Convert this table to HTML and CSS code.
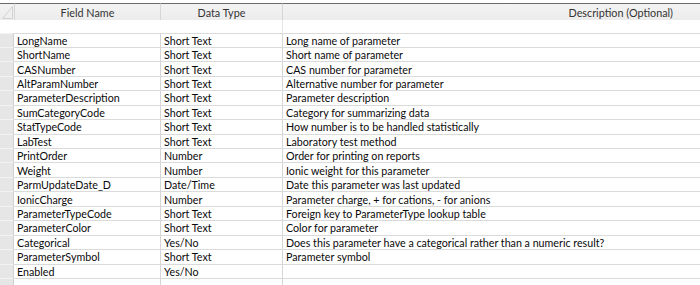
FILE: index.html
```html
<!DOCTYPE html>
<html>
<head>
<meta charset="utf-8">
<link rel="stylesheet" href="styles.css">
</head>
<body>
<div class="sheet">
  <div class="hdr sel"><svg class="corner" width="14" height="16" viewBox="0 0 14 16"><path d="M12.5 2.5 L12.5 14.5 L2.5 14.5 Z" fill="none" stroke="#d2d2d2" stroke-width="1"/></svg></div>
  <div class="hdr c1">Field Name</div>
  <div class="hdr c2">Data Type</div>
  <div class="hdr c3">Description (Optional)</div>

  <div class="gap sel"></div><div class="gap"></div><div class="gap"></div><div class="gap c3g"></div>

  <div class="sel row"></div><div class="cell c1">LongName</div><div class="cell c2">Short Text</div><div class="cell c3">Long name of parameter</div>
  <div class="sel row"></div><div class="cell c1">ShortName</div><div class="cell c2">Short Text</div><div class="cell c3">Short name of parameter</div>
  <div class="sel row"></div><div class="cell c1">CASNumber</div><div class="cell c2">Short Text</div><div class="cell c3">CAS number for parameter</div>
  <div class="sel row"></div><div class="cell c1">AltParamNumber</div><div class="cell c2">Short Text</div><div class="cell c3">Alternative number for parameter</div>
  <div class="sel row"></div><div class="cell c1">ParameterDescription</div><div class="cell c2">Short Text</div><div class="cell c3">Parameter description</div>
  <div class="sel row"></div><div class="cell c1">SumCategoryCode</div><div class="cell c2">Short Text</div><div class="cell c3">Category for summarizing data</div>
  <div class="sel row"></div><div class="cell c1">StatTypeCode</div><div class="cell c2">Short Text</div><div class="cell c3">How number is to be handled statistically</div>
  <div class="sel row"></div><div class="cell c1">LabTest</div><div class="cell c2">Short Text</div><div class="cell c3">Laboratory test method</div>
  <div class="sel row"></div><div class="cell c1">PrintOrder</div><div class="cell c2">Number</div><div class="cell c3">Order for printing on reports</div>
  <div class="sel row"></div><div class="cell c1">Weight</div><div class="cell c2">Number</div><div class="cell c3">Ionic weight for this parameter</div>
  <div class="sel row"></div><div class="cell c1">ParmUpdateDate_D</div><div class="cell c2">Date/Time</div><div class="cell c3">Date this parameter was last updated</div>
  <div class="sel row"></div><div class="cell c1">IonicCharge</div><div class="cell c2">Number</div><div class="cell c3">Parameter charge, + for cations, - for anions</div>
  <div class="sel row"></div><div class="cell c1">ParameterTypeCode</div><div class="cell c2">Short Text</div><div class="cell c3">Foreign key to ParameterType lookup table</div>
  <div class="sel row"></div><div class="cell c1">ParameterColor</div><div class="cell c2">Short Text</div><div class="cell c3">Color for parameter</div>
  <div class="sel row"></div><div class="cell c1">Categorical</div><div class="cell c2">Yes/No</div><div class="cell c3">Does this parameter have a categorical rather than a numeric result?</div>
  <div class="sel row"></div><div class="cell c1">ParameterSymbol</div><div class="cell c2">Short Text</div><div class="cell c3">Parameter symbol</div>
  <div class="sel row"></div><div class="cell c1">Enabled</div><div class="cell c2">Yes/No</div><div class="cell c3"></div>
  <div class="sel row"></div><div class="cell c1"></div><div class="cell c2"></div><div class="cell c3"></div>
</div>
</body>
</html>
```

FILE: styles.css
```css
html, body {
  margin: 0;
  padding: 0;
  background: #ffffff;
  overflow: hidden;
}
body {
  padding-top: 3px;
  font-family: Lato, "Open Sans", sans-serif;
  font-size: 10.7px;
  color: #0a0a0a;
}
.sheet {
  display: grid;
  grid-template-columns: 14px 146px 122px 1fr;
  grid-template-rows: 17px 12.5px;
  grid-auto-rows: 14.45px;
  width: 700px;
}
.hdr {
  border-top: 1px solid #6a6a6a;
  background: linear-gradient(#f3f3f3, #ececec);
  color: #333333;
  display: flex;
  align-items: center;
  justify-content: center;
  font-size: 10.8px;
  border-left: 1px solid #d6d6d6;
}
.hdr.sel {
  border-left: none;
  justify-content: flex-start;
  align-items: flex-start;
}
.corner {
  display: block;
}
.hdr.c3 {
  justify-content: flex-end;
  padding-right: 27px;
}
.gap {
  background: #ffffff;
}
.c3g {
  border-left: 1px solid #e4e4e4;
}
.sel.row {
  background: #e6e6e6;
  border-top: 1px solid #f2f2f2;
  border-right: 1px solid #cfcfcf;
}
.cell {
  border-top: 1px solid #dadada;
  display: flex;
  align-items: center;
  padding-left: 3px;
  white-space: nowrap;
  overflow: hidden;
}
.cell.c2, .cell.c3 {
  border-left: 1px solid #d6d6d6;
}
```
